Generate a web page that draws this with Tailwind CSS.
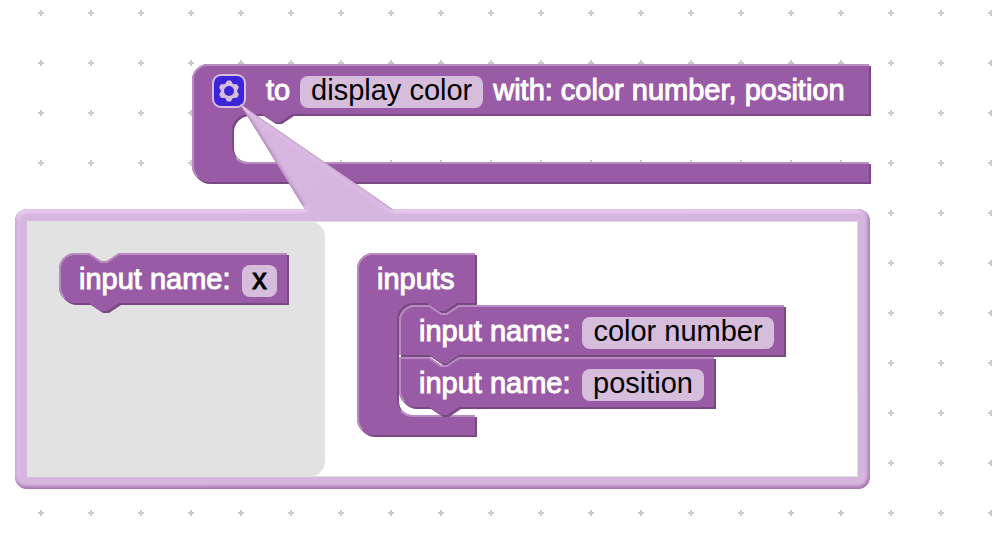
<!DOCTYPE html>
<html lang="en">
<head>
<meta charset="utf-8">
<meta name="viewport" content="width=device-width, initial-scale=1">
<title>Block editor</title>
<script src="https://cdn.jsdelivr.net/npm/@tailwindcss/browser@4"></script>
</head>
<body class="bg-white">
<main class="relative min-h-screen w-full overflow-hidden font-['Liberation_Sans',Arial,sans-serif] text-[29px] leading-7 text-white">

  <!-- Workspace grid -->
  <svg class="absolute inset-0 h-full w-full" aria-hidden="true">
    <defs>
      <pattern id="grid" width="50" height="50" x="16" y="38" patternUnits="userSpaceOnUse">
        <path d="M22 25h6M25 22v6" stroke="#ccc" stroke-width="2"/>
      </pattern>
    </defs>
    <rect width="100%" height="100%" fill="url(#grid)"/>
  </svg>

  <!-- Procedure definition block -->
  <section class="absolute left-[192px] top-16 h-[118px] w-[677px]">
    <svg class="absolute inset-0 h-full w-full overflow-visible" viewBox="0 0 338.5 59" aria-hidden="true">
      <path transform="translate(1 1)" fill="#7a4984" d="M0 8A8 8 0 0 1 8 0H338.5V25H50l-6 4h-3l-6-4H28a8 8 0 0 0-8 8v8a8 8 0 0 0 8 8H338.5V59H8A8 8 0 0 1 0 51z"/>
      <path fill="#995ba5" d="M0 8A8 8 0 0 1 8 0H338.5V25H50l-6 4h-3l-6-4H28a8 8 0 0 0-8 8v8a8 8 0 0 0 8 8H338.5V59H8A8 8 0 0 1 0 51z"/>
      <path fill="none" stroke="#b88cc0" d="M2.7 56.3A7.5 7.5 0 0 1 .5 51V8A7.5 7.5 0 0 1 8 .5H338.5M22 47A8.5 8.5 0 0 0 28 49.5H338.5"/>
    </svg>
    <div class="relative flex items-start pl-5 pt-3">
      <button type="button" aria-label="Edit inputs" class="-mt-[2px] mr-5 block h-[34px] w-[34px] shrink-0">
        <svg class="h-[34px] w-[34px] opacity-60" viewBox="-8.500 -8.500 17 17" aria-hidden="true">
          <rect x="-8" y="-8" width="16" height="16" rx="4" fill="#00f" stroke="#fff"/>
          <path fill="#fff" stroke="#fff" stroke-width=".7" stroke-linejoin="round" d="M-.77-4.84H.77L1.8-3.12 3.81-3.08 4.57-1.76 3.6 0 4.57 1.76 3.81 3.08 1.8 3.12 .77 4.84H-.77L-1.8 3.12-3.81 3.08-4.57 1.76-3.6 0-4.57-1.76-3.81-3.08-1.8-3.12z"/>
          <circle r="2.5" fill="#00f"/>
        </svg>
      </button>
      <label for="proc" class="mr-[10px] [-webkit-text-stroke:1px_white]">to</label>
      <input id="proc" type="text" value="display color" class="mr-[10px] h-8 w-[183px] rounded-lg bg-[#d6bddb] pb-1 text-center text-black outline-none">
      <span class="whitespace-nowrap [-webkit-text-stroke:1px_white]">with: color number, position</span>
    </div>
  </section>

  <!-- Mutator bubble -->
  <section class="absolute left-[15px] top-[209px] h-[280px] w-[855px] p-3">
    <svg class="absolute inset-0 h-full w-full overflow-visible" viewBox="0 0 427.5 140" aria-hidden="true">
      <defs>
        <filter id="emboss">
          <feGaussianBlur in="SourceAlpha" stdDeviation="1" result="blur"/>
          <feSpecularLighting in="blur" surfaceScale="0.5" specularConstant="0.5" specularExponent="10" lighting-color="white" result="specOut">
            <fePointLight x="-5000" y="-10000" z="20000"/>
          </feSpecularLighting>
          <feComposite in="specOut" in2="SourceAlpha" operator="in" result="specOut"/>
          <feComposite in="SourceGraphic" in2="specOut" operator="arithmetic" k1="0" k2="1" k3="1" k4="0"/>
        </filter>
      </defs>
      <g filter="url(#emboss)" fill="#995ba5">
        <path d="M112.5 -52.5L144.8 0L146.6 3H193.2L188.8 0z"/>
        <rect width="427.5" height="140" rx="6"/>
      </g>
    </svg>
    <div class="relative flex h-full border border-l-0 border-[#ddd] bg-white">
      <aside class="-my-px w-[298px] rounded-r-2xl bg-[#e2e2e2] pl-8 pt-8">
        <div class="relative h-[50px] w-[228px]">
          <svg class="absolute inset-0 h-full w-full overflow-visible" viewBox="0 0 114 25" aria-hidden="true">
            <path transform="translate(1 1)" fill="#7a4984" d="M0 8A8 8 0 0 1 8 0H15l6 4h3l6-4H114V25H30l-6 4h-3l-6-4H8A8 8 0 0 1 0 17z"/>
            <path fill="#995ba5" d="M0 8A8 8 0 0 1 8 0H15l6 4h3l6-4H114V25H30l-6 4h-3l-6-4H8A8 8 0 0 1 0 17z"/>
            <path fill="none" stroke="#b88cc0" d="M2.7 22.3A7.5 7.5 0 0 1 .5 17V8A7.5 7.5 0 0 1 8 .5H15l6 4h3l6-4H114"/>
          </svg>
          <div class="relative flex items-start justify-between pl-5 pr-[10px] pt-3">
            <label for="in0" class="whitespace-nowrap [-webkit-text-stroke:1px_white]">input name:</label>
            <input id="in0" type="text" value="x" class="h-8 w-[35px] rounded-lg bg-[#d6bddb] pb-1 text-center text-black outline-none [-webkit-text-stroke:1px_black]">
          </div>
        </div>
      </aside>
      <div class="-my-px flex-1 pl-8 pt-8">
        <div class="relative h-[182px] w-[118px]">
          <svg class="absolute inset-0 h-full w-full overflow-visible" viewBox="0 0 59 91" aria-hidden="true">
            <path transform="translate(1 1)" fill="#7a4984" d="M0 8A8 8 0 0 1 8 0H59V25H50l-6 4h-3l-6-4H28a8 8 0 0 0-8 8v40a8 8 0 0 0 8 8H59V91H8A8 8 0 0 1 0 83z"/>
            <path fill="#995ba5" d="M0 8A8 8 0 0 1 8 0H59V25H50l-6 4h-3l-6-4H28a8 8 0 0 0-8 8v40a8 8 0 0 0 8 8H59V91H8A8 8 0 0 1 0 83z"/>
            <path fill="none" stroke="#b88cc0" d="M2.7 88.3A7.5 7.5 0 0 1 .5 83V8A7.5 7.5 0 0 1 8 .5H59M22 79A8.5 8.5 0 0 0 28 81.5H59"/>
          </svg>
          <div class="relative h-[52px] pl-5 pt-3 [-webkit-text-stroke:1px_white]">inputs</div>
          <div class="relative ml-[42px] flex flex-col gap-[2px]">
            <div class="relative h-[50px] w-[385px]">
              <svg class="absolute inset-0 h-full w-full overflow-visible" viewBox="0 0 192.5 25" aria-hidden="true">
                <path transform="translate(1 1)" fill="#7a4984" d="M0 8A8 8 0 0 1 8 0H15l6 4h3l6-4H192.5V25H30l-6 4h-3l-6-4H0z"/>
                <path fill="#995ba5" d="M0 8A8 8 0 0 1 8 0H15l6 4h3l6-4H192.5V25H30l-6 4h-3l-6-4H0z"/>
                <path fill="none" stroke="#b88cc0" d="M.5 25V8A7.5 7.5 0 0 1 8 .5H15l6 4h3l6-4H192.5"/>
              </svg>
              <div class="relative flex items-start justify-between pl-5 pr-[10px] pt-3">
                <label for="in1" class="whitespace-nowrap [-webkit-text-stroke:1px_white]">input name:</label>
                <input id="in1" type="text" value="color number" class="h-8 w-[192px] rounded-lg bg-[#d6bddb] pb-1 text-center text-black outline-none">
              </div>
            </div>
            <div class="relative h-[50px] w-[315px]">
              <svg class="absolute inset-0 h-full w-full overflow-visible" viewBox="0 0 157.5 25" aria-hidden="true">
                <path transform="translate(1 1)" fill="#7a4984" d="M0 0H15l6 4h3l6-4H157.5V25H30l-6 4h-3l-6-4H8A8 8 0 0 1 0 17z"/>
                <path fill="#995ba5" d="M0 0H15l6 4h3l6-4H157.5V25H30l-6 4h-3l-6-4H8A8 8 0 0 1 0 17z"/>
                <path fill="none" stroke="#b88cc0" d="M2.7 22.3A7.5 7.5 0 0 1 .5 17V.5H15l6 4h3l6-4H157.5"/>
              </svg>
              <div class="relative flex items-start justify-between pl-5 pr-[10px] pt-3">
                <label for="in2" class="whitespace-nowrap [-webkit-text-stroke:1px_white]">input name:</label>
                <input id="in2" type="text" value="position" class="h-8 w-[122px] rounded-lg bg-[#d6bddb] pb-1 text-center text-black outline-none">
              </div>
            </div>
          </div>
        </div>
      </div>
    </div>
  </section>
</main>
</body>
</html>
